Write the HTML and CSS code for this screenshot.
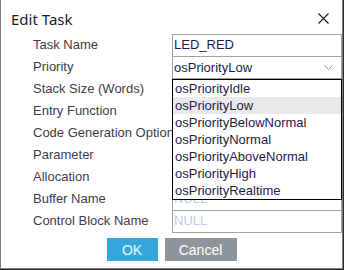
FILE: index.html
```html
<!DOCTYPE html>
<html lang="en">
    <head>
        <meta charset="UTF-8" />
        <meta name="viewport" content="width=device-width, initial-scale=1.0" />
        <title>Edit Task</title>
        <link rel="stylesheet" href="styles.css">
    </head>
    <body>
        <div class="dialog">
            <div class="title-bar">
                <span class="title">Edit Task</span>
                <svg class="close" width="11" height="11" viewBox="0 0 11 11">
                    <path d="M0.5 0.5 L10.5 10.5 M10.5 0.5 L0.5 10.5" stroke="#1a1a1a" stroke-width="1.1" fill="none" />
                </svg>
            </div>

            <div class="form">
                <div class="row">
                    <label class="label">Task Name</label>
                    <div class="field">LED_RED</div>
                </div>
                <div class="row">
                    <label class="label">Priority</label>
                    <div class="field select">
                        <span>osPriorityLow</span>
                        <svg class="chevron" width="9" height="6" viewBox="0 0 9 6">
                            <path d="M0.5 0.5 L4.5 4.5 L8.5 0.5" stroke="#9a9a9a" stroke-width="1" fill="none" />
                        </svg>
                    </div>
                    <ul class="dropdown">
                        <li>osPriorityIdle</li>
                        <li class="active">osPriorityLow</li>
                        <li>osPriorityBelowNormal</li>
                        <li>osPriorityNormal</li>
                        <li>osPriorityAboveNormal</li>
                        <li>osPriorityHigh</li>
                        <li>osPriorityRealtime</li>
                    </ul>
                </div>
                <div class="row">
                    <label class="label">Stack Size (Words)</label>
                    <div class="field"></div>
                </div>
                <div class="row">
                    <label class="label">Entry Function</label>
                    <div class="field"></div>
                </div>
                <div class="row">
                    <label class="label">Code Generation Option</label>
                    <div class="field"></div>
                </div>
                <div class="row">
                    <label class="label">Parameter</label>
                    <div class="field"></div>
                </div>
                <div class="row">
                    <label class="label">Allocation</label>
                    <div class="field"></div>
                </div>
                <div class="row">
                    <label class="label">Buffer Name</label>
                    <div class="field empty">NULL</div>
                </div>
                <div class="row">
                    <label class="label">Control Block Name</label>
                    <div class="field empty last">NULL</div>
                </div>
            </div>

            <div class="buttons">
                <button class="btn ok">OK</button>
                <button class="btn cancel">Cancel</button>
            </div>
        </div>
    </body>
</html>
```

FILE: styles.css
```css
* {
    padding: 0;
    margin: 0;
    box-sizing: border-box;
}

html,
body {
    height: 100%;
    width: 100%;
}

body {
    background-color: #2e2e2e;
    font-family: "Liberation Sans", Arial, sans-serif;
    font-size: 13px;
}

.dialog {
    width: 343px;
    height: 269px;
    background-color: #fff;
    border: 1px solid #7a7a7a;
    border-top: none;
}

.title-bar {
    height: 34px;
    display: flex;
    align-items: center;
    justify-content: space-between;
    padding: 3px 13px 0 10px;
}

.title {
    font-family: "Noto Sans", sans-serif;
    font-size: 15px;
    color: #1b1b35;
}

.form {
    display: flex;
    flex-direction: column;
}

.row {
    position: relative;
    height: 22px;
    display: flex;
}

.label {
    width: 171px;
    padding-left: 32px;
    line-height: 22px;
    color: #3e3e50;
    white-space: nowrap;
    overflow: visible;
}

.field {
    flex: 1;
    height: 22px;
    border: 1px solid #a3a3a3;
    border-bottom: none;
    padding-left: 1px;
    line-height: 20px;
    color: #1d1d4a;
    background-color: #fff;
    position: relative;
    z-index: 1;
}

.field.last {
    height: 23px;
    border-bottom: 1px solid #a3a3a3;
}

.field.empty {
    color: #b9cdea;
}

.select {
    display: flex;
    align-items: center;
    justify-content: space-between;
    padding-right: 8px;
}

.chevron {
    margin-top: 1px;
}

.dropdown {
    position: absolute;
    left: 171px;
    top: 23px;
    right: 0;
    height: 121px;
    list-style: none;
    border: 1px solid #000;
    background-color: #fff;
    z-index: 5;
}

.dropdown li {
    height: 17px;
    line-height: 17px;
    padding-left: 2px;
    color: #1d1d4a;
}

.dropdown li.active {
    background-color: #e9e9ec;
}

.buttons {
    display: flex;
    justify-content: center;
    gap: 7px;
    margin-top: 6px;
}

.btn {
    height: 23px;
    border: none;
    color: #fff;
    font-family: "Liberation Sans", Arial, sans-serif;
    font-size: 14px;
}

.ok {
    width: 51px;
    background-color: #38a8dc;
    color: #e8f5fc;
}

.cancel {
    width: 72px;
    background-color: #8e959b;
}
```
